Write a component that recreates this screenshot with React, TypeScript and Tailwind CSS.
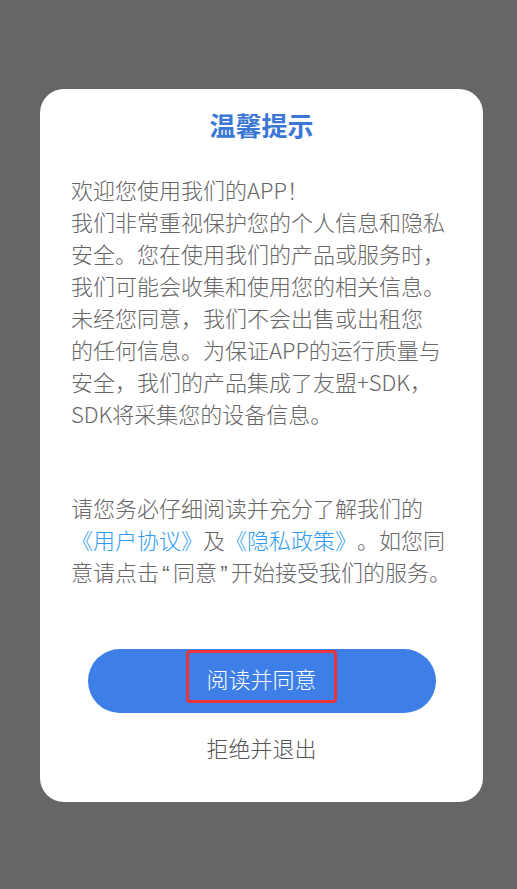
import React from "react";

const font = { fontFamily: '"Noto Sans CJK SC", "Noto Sans", sans-serif' };

function Q({ c }: { c: string }) {
  return (
    <span
      className="inline-block w-[14px] text-center"
      style={{ fontFamily: '"Liberation Sans", sans-serif' }}
    >
      {c}
    </span>
  );
}

export default function App() {
  const lines1 = [
    "欢迎您使用我们的APP！",
    "我们非常重视保护您的个人信息和隐私",
    "安全。您在使用我们的产品或服务时，",
    "我们可能会收集和使用您的相关信息。",
    "未经您同意，我们不会出售或出租您",
    "的任何信息。为保证APP的运行质量与",
    "安全，我们的产品集成了友盟+SDK，",
    "SDK将采集您的设备信息。",
  ];
  return (
    <div
      className="w-[517px] h-[889px] bg-[#666666] pt-[89px] px-[40px] overflow-hidden"
      style={font}
    >
      <div className="w-[443px] h-[713px] bg-white rounded-[24px] flex flex-col items-center">
        <div className="mt-[18px] h-[36px] leading-[36px] text-[26px] font-bold text-[#3b78d6]">
          温馨提示
        </div>
        <div className="mt-[30px] w-full pl-[31px] text-[22px] leading-[32px] font-light text-[#666666] [text-spacing-trim:space-all]">
          {lines1.map((l, i) => (
            <div key={i} className="whitespace-nowrap h-[32px]">
              {l}
            </div>
          ))}
          <div className="h-[62px]" />
          <div className="whitespace-nowrap h-[32px]">请您务必仔细阅读并充分了解我们的</div>
          <div className="whitespace-nowrap h-[32px]">
            <span className="text-[#2f9bf0]">《用户协议》</span>及
            <span className="text-[#2f9bf0]">《隐私政策》</span>。如您同
          </div>
          <div className="whitespace-nowrap h-[32px]">
            意请点击
            <Q c="“" />
            同意
            <Q c="”" />
            开始接受我们的服务。
          </div>
        </div>
        <div className="mt-[62px] w-[348px] h-[64px] rounded-full bg-[#3d7fe7] flex justify-center">
          <span className="mt-[1px] h-[53px] px-[17px] pt-[11px] border-[3px] border-[#e8343a] rounded-[4px] text-[22px] leading-[28px] font-light text-white">
            阅读并同意
          </span>
        </div>
        <div className="mt-[18px] h-[32px] leading-[32px] text-[22px] font-light text-[#555555]">
          拒绝并退出
        </div>
      </div>
    </div>
  );
}
